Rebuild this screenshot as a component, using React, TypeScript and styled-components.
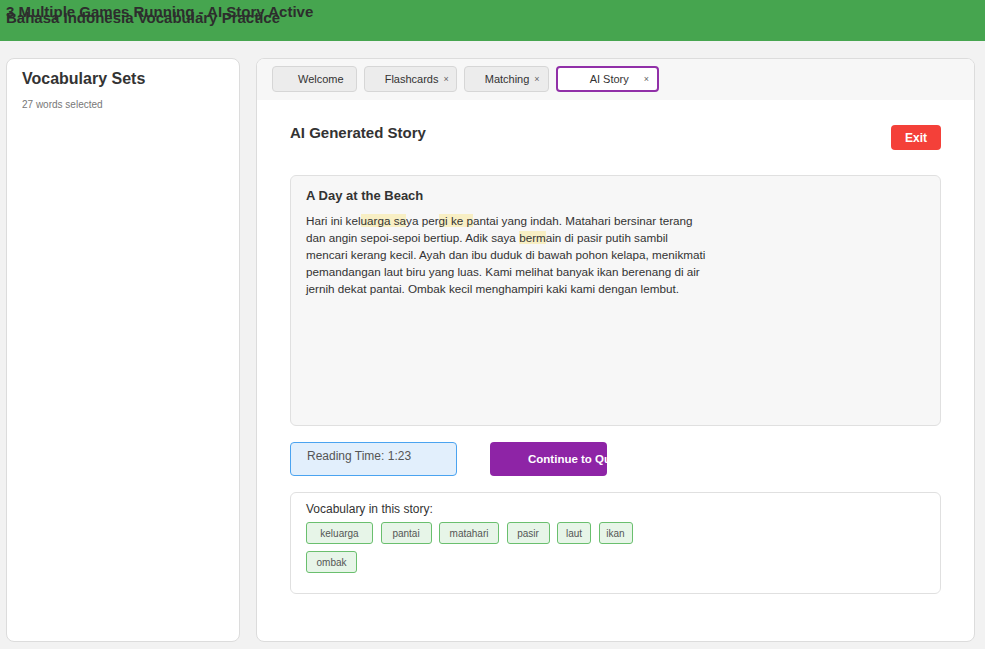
import React from "react";
import styled, { createGlobalStyle, css } from "styled-components";

const Global = createGlobalStyle`
  html, body { margin: 0; padding: 0; }
  body {
    background: #f2f2f2;
    font-family: "Liberation Sans", Arial, Helvetica, sans-serif;
    color: #333;
  }
  * { box-sizing: border-box; }
`;

const Page = styled.div`
  width: 985px;
  height: 649px;
  display: flex;
  flex-direction: column;
  overflow: hidden;
`;

const Header = styled.header`
  position: relative;
  height: 41px;
  flex: none;
  background: #46a54f;
  padding: 9px 6px 0;
`;

const HeaderTitle = styled.h1`
  margin: 0;
  font-size: 15px;
  line-height: 17px;
  font-weight: bold;
  color: #2d2d2d;
`;

const HeaderStatus = styled.div`
  position: absolute;
  top: 3px;
  left: 6px;
  font-size: 15px;
  line-height: 17px;
  font-weight: bold;
  color: #2d2d2d;
  white-space: nowrap;
`;

const Body = styled.div`
  flex: 1;
  display: flex;
  gap: 16px;
  padding: 17px 10px 7px 6px;
  min-height: 0;
`;

const Sidebar = styled.aside`
  width: 234px;
  flex: none;
  background: #fff;
  border: 1px solid #dcdcdc;
  border-radius: 8px;
  padding: 10px 15px;
`;

const SidebarTitle = styled.h2`
  margin: 0;
  font-size: 16px;
  line-height: 20px;
  font-weight: bold;
  color: #333;
`;

const SidebarNote = styled.div`
  margin-top: 10px;
  font-size: 10px;
  line-height: 12px;
  color: #777;
`;

const Main = styled.main`
  flex: 1;
  display: flex;
  flex-direction: column;
  background: #fff;
  border: 1px solid #dcdcdc;
  border-radius: 8px;
  overflow: hidden;
`;

const TabBar = styled.div`
  height: 41px;
  flex: none;
  display: flex;
  gap: 7px;
  align-items: flex-start;
  padding: 7px 15px 0;
  background: #f7f7f7;
`;

const Tab = styled.div<{ $active?: boolean; $lead: number; $trail: number }>`
  height: 26px;
  display: flex;
  align-items: center;
  padding-left: ${(p) => p.$lead}px;
  padding-right: ${(p) => p.$trail}px;
  font-size: 11px;
  color: #333;
  background: #ececec;
  border: 1px solid #d6d6d6;
  border-radius: 4px;
  white-space: nowrap;
  ${(p) =>
    p.$active &&
    css`
      background: #fff;
      border: 2px solid #9130a8;
    `}
`;

const TabClose = styled.span<{ $gap: number }>`
  margin-left: ${(p) => p.$gap}px;
  font-size: 9px;
  color: #666;
`;

const Content = styled.div`
  flex: 1;
  padding: 24px 33px 0;
  display: flex;
  flex-direction: column;
`;

const TitleRow = styled.div`
  display: flex;
  justify-content: space-between;
  align-items: flex-start;
`;

const PageTitle = styled.h2`
  margin: 0;
  font-size: 15px;
  line-height: 18px;
  font-weight: bold;
  color: #333;
`;

const ExitButton = styled.button`
  margin-top: 1px;
  width: 50px;
  height: 25px;
  border: none;
  border-radius: 4px;
  background: #f44039;
  color: #fff;
  font-family: inherit;
  font-size: 12px;
  font-weight: bold;
  padding: 0;
`;

const StoryBox = styled.section`
  margin-top: 25px;
  height: 251px;
  background: #f7f7f7;
  border: 1px solid #e0e0e0;
  border-radius: 6px;
  padding: 12px 15px;
`;

const StoryTitle = styled.h3`
  margin: 0;
  font-size: 13px;
  line-height: 16px;
  font-weight: bold;
  color: #333;
`;

const StoryText = styled.p`
  margin: 8px 0 0;
  max-width: 405px;
  font-size: 11.7px;
  line-height: 17px;
  color: #333;
`;

const Mark = styled.span`
  background: #f8efc4;
`;

const ActionRow = styled.div`
  margin-top: 16px;
  display: flex;
  gap: 33px;
`;

const ReadingBox = styled.div`
  width: 167px;
  height: 34px;
  background: #e2effc;
  border: 1px solid #4aa3f0;
  border-radius: 4px;
  padding: 6px 16px 0;
  font-size: 12px;
  line-height: 14px;
  color: #555;
`;

const ContinueButton = styled.button`
  width: 117px;
  height: 34px;
  border: none;
  border-radius: 4px;
  background: #8e24a6;
  color: #fff;
  font-family: inherit;
  font-size: 11.5px;
  font-weight: bold;
  padding: 0 0 0 38px;
  text-align: left;
  white-space: nowrap;
  overflow: hidden;
`;

const VocabBox = styled.section`
  margin-top: 16px;
  border: 1px solid #e0e0e0;
  border-radius: 6px;
  padding: 9px 15px 20px;
`;

const VocabLabel = styled.div`
  font-size: 12px;
  line-height: 14px;
  color: #333;
`;

const ChipList = styled.div`
  margin-top: 6px;
  display: flex;
  flex-wrap: wrap;
  gap: 7px 7.5px;
  width: 340px;
`;

const Chip = styled.span<{ $w: number }>`
  width: ${(p) => p.$w}px;
  height: 22px;
  display: flex;
  align-items: center;
  justify-content: center;
  background: #e7f5e8;
  border: 1px solid #6abf6e;
  border-radius: 3px;
  font-size: 10px;
  color: #555;
`;

const tabs = [
  { label: "Welcome", lead: 25, trail: 12 },
  { label: "Flashcards", lead: 20, trail: 7, close: true, gap: 5 },
  { label: "Matching", lead: 20, trail: 8, close: true, gap: 5 },
  { label: "AI Story", lead: 32, trail: 8, close: true, gap: 15, active: true },
];

const vocab = [
  { w: "keluarga", width: 67 },
  { w: "pantai", width: 51 },
  { w: "matahari", width: 60 },
  { w: "pasir", width: 43 },
  { w: "laut", width: 34 },
  { w: "ikan", width: 34 },
  { w: "ombak", width: 51 },
];

export default function App() {
  return (
    <Page>
      <Global />
      <Header>
        <HeaderTitle>Bahasa Indonesia Vocabulary Practice</HeaderTitle>
        <HeaderStatus>3 Multiple Games Running - AI Story Active</HeaderStatus>
      </Header>
      <Body>
        <Sidebar>
          <SidebarTitle>Vocabulary Sets</SidebarTitle>
          <SidebarNote>27 words selected</SidebarNote>
        </Sidebar>
        <Main>
          <TabBar>
            {tabs.map((t) => (
              <Tab key={t.label} $active={t.active} $lead={t.lead} $trail={t.trail}>
                {t.label}
                {t.close && <TabClose $gap={t.gap ?? 5}>×</TabClose>}
              </Tab>
            ))}
          </TabBar>
          <Content>
            <TitleRow>
              <PageTitle>AI Generated Story</PageTitle>
              <ExitButton>Exit</ExitButton>
            </TitleRow>
            <StoryBox>
              <StoryTitle>A Day at the Beach</StoryTitle>
              <StoryText>
                Hari ini kel<Mark>uarga sa</Mark>ya per<Mark>gi ke p</Mark>antai yang indah. Matahari
                bersinar terang dan angin sepoi-sepoi bertiup. Adik saya <Mark>berm</Mark>ain di pasir
                putih sambil mencari kerang kecil. Ayah dan ibu duduk di bawah pohon kelapa, menikmati
                pemandangan laut biru yang luas. Kami melihat banyak ikan berenang di air jernih dekat
                pantai. Ombak kecil menghampiri kaki kami dengan lembut.
              </StoryText>
            </StoryBox>
            <ActionRow>
              <ReadingBox>Reading Time: 1:23</ReadingBox>
              <ContinueButton>Continue to Quiz</ContinueButton>
            </ActionRow>
            <VocabBox>
              <VocabLabel>Vocabulary in this story:</VocabLabel>
              <ChipList>
                {vocab.map((v) => (
                  <Chip key={v.w} $w={v.width}>
                    {v.w}
                  </Chip>
                ))}
              </ChipList>
            </VocabBox>
          </Content>
        </Main>
      </Body>
    </Page>
  );
}
